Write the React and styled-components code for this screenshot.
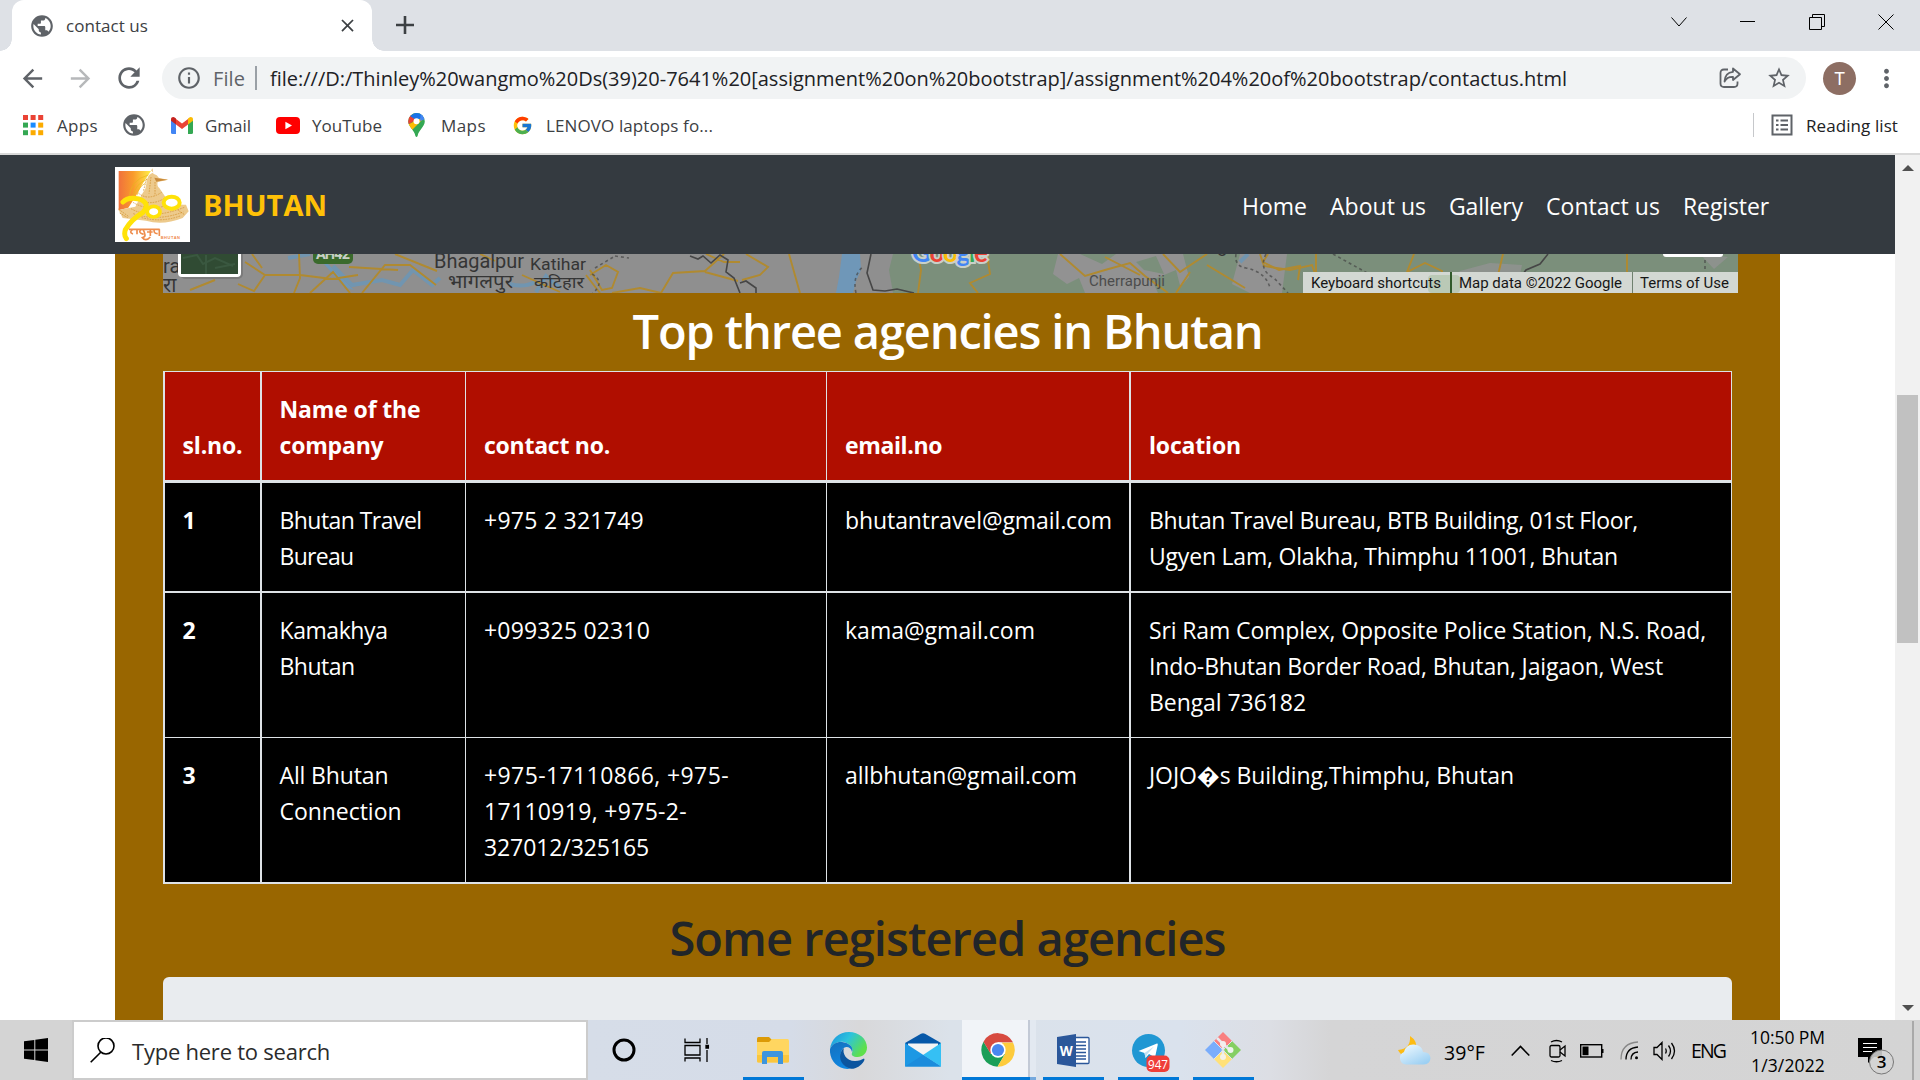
import React, { useLayoutEffect, useRef, useState } from 'react';
import styled, { createGlobalStyle } from 'styled-components';
import { MdPublic, MdClose, MdArrowBack, MdArrowForward, MdRefresh, MdInfoOutline, MdStarBorder, MdMoreVert } from 'react-icons/md';
import { FcGoogle } from 'react-icons/fc';

const Global = createGlobalStyle`
  * { box-sizing: border-box; }
  body { margin: 0; overflow: hidden; background: #fff; font-family: "Open Sans", "Noto Sans", sans-serif; }
  svg { display: block; flex: none; }
`;

/* ---------- text that is tracked to a fixed measure ---------- */
const FitSpan = styled.span`
  display: block;
  width: max-content;
  white-space: pre;
  margin-left: ${p => p.$ml || 0}px;
`;

function Fit({ w, ml, children }) {
  const ref = useRef(null);
  const [spacing, setSpacing] = useState(0);
  useLayoutEffect(() => {
    const natural = ref.current.getBoundingClientRect().width;
    setSpacing((w - natural) / String(children).length);
  }, [w, children]);
  return <FitSpan ref={ref} $ml={ml} style={{ letterSpacing: spacing }}>{children}</FitSpan>;
}

const Screen = styled.div`
  width: 1920px; height: 1080px; display: flex; flex-direction: column; overflow: hidden;
`;

/* ---------- browser chrome ---------- */
const TabStrip = styled.div`
  height: 51px; flex: none; background: #dee1e6; display: flex; padding-left: 12px;
`;
const Tab = styled.div`
  width: 360px; height: 51px; background: #fff; border-radius: 12px 12px 0 0; position: relative;
  display: flex; align-items: center; padding: 0 14px 0 17px; color: #3c4043; font-size: 17px;
  &::before, &::after {
    content: ''; position: absolute; bottom: 0; width: 12px; height: 12px;
  }
  &::before { left: -12px; background: radial-gradient(circle at 0 0, transparent 11.5px, #fff 12px); }
  &::after { right: -12px; background: radial-gradient(circle at 100% 0, transparent 11.5px, #fff 12px); }
`;
const TabTitle = styled.div`flex: 1; padding-left: 11px;`;
const NewTab = styled.div`padding: 16px 0 0 24px;`;
const WindowButtons = styled.div`margin-left: auto; display: flex; height: 43px;`;
const WindowButton = styled.div`
  width: 69px; display: flex; align-items: center; justify-content: center;
`;

const Toolbar = styled.div`
  height: 54px; flex: none; display: flex; align-items: center; padding-left: 18px; color: #5f6368;
`;
const ToolIcon = styled.div`margin-left: ${p => p.$ml || 0}px; opacity: ${p => (p.$dim ? 0.45 : 1)};`;
const Omnibox = styled.div`
  width: 1644px; height: 42px; border-radius: 21px; background: #f1f3f4; margin-left: 17px;
  display: flex; align-items: center; padding: 0 14px 0 14px; font-size: 20px;
`;
const OmniDivider = styled.div`width: 2px; height: 24px; background: #9aa0a6; margin: 0 13px 0 10px;`;
const Url = styled.div`color: #202124; flex: 1;`;
const Avatar = styled.div`
  width: 33px; height: 33px; border-radius: 50%; background: #8d6e63; color: #fff; margin-left: 17px;
  font: 18px/33px Roboto, sans-serif; text-align: center;
`;

const Bookmarks = styled.div`
  height: 50px; flex: none; padding: 0 22px 8px 22px; border-bottom: 2px solid #d9d9d9;
  display: flex; align-items: center; font-size: 17px; color: #3c4043;
`;
const Bookmark = styled.div`display: flex; align-items: center; margin-left: ${p => p.$ml || 0}px;`;
const ReadingList = styled.div`
  margin-left: auto; height: 24px; border-left: 1px solid #c6c8cb; padding-left: 17px; display: flex; align-items: center; color: #202124;
`;

/* ---------- page ---------- */
const Viewport = styled.div`flex: 1; min-height: 0; display: flex; overflow: hidden;`;
const Page = styled.div`width: 1895px; overflow: hidden; background: #fff;`;
const Navbar = styled.div`
  height: 99px; background: #343a40; display: flex; align-items: center; padding-left: 115px; color: #fff; font-size: 23px;
`;
const Brand = styled.div`font-size: 29px; font-weight: 700; color: #ffc107; margin-left: 13px;`;
const NavLinks = styled.nav`display: flex; margin: 3px 126px 0 auto;`;
const Container = styled.div`
  width: 1665px; height: 766px; margin-left: 115px; background: #996600; padding-left: 48px;
`;
const Heading = styled.h1`
  margin: 0; height: ${p => p.$h}px; padding-top: ${p => p.$pt || 0}px; width: 1569px; display: flex; justify-content: center;
  font-size: 47px; line-height: 76px; font-weight: 600; color: ${p => p.$color};
`;
const MapStrip = styled.div`height: 39px; width: 1575px; overflow: hidden;`;

const Table = styled.div`
  width: 1569px; border: solid #dee2e6; border-width: 1px 1px 2px 2px; color: #fff; font-size: 23px; line-height: 36px;
`;
const Row = styled.div`
  display: grid; grid-template-columns: 97px 204px 361px 304px 600px; height: ${p => p.$h}px;
  background: ${p => (p.$head ? '#b00e00' : '#000')}; border-bottom: ${p => p.$line}px solid #dee2e6;
  font-weight: ${p => (p.$head ? 700 : 400)};
`;
const Cell = styled.div`
  padding: 19px 0 17px ${p => p.$pl}px; display: flex; flex-direction: column;
  justify-content: ${p => (p.$bottom ? 'flex-end' : 'flex-start')};
  border-right: ${p => p.$line}px solid #dee2e6; font-weight: ${p => (p.$bold ? 700 : 'inherit')};
`;
const Panel = styled.div`width: 1569px; height: 60px; background: #e9ecef; border-radius: 6px;`;

const ScrollTrack = styled.div`
  width: 25px; background: #f1f1f1; display: flex; flex-direction: column; align-items: center; padding: 10px 0 9px;
`;
const Arrow = styled.div`
  width: 0; height: 0; border: solid transparent; border-width: 0 6px;
  ${p => (p.$down ? 'border-top: 6px solid #505050; margin-top: auto;' : 'border-bottom: 6px solid #505050;')}
`;
const Thumb = styled.div`width: 21px; height: 248px; background: #c1c1c1; margin-top: 224px;`;

/* ---------- taskbar ---------- */
const Taskbar = styled.div`
  height: 60px; flex: none; display: flex; align-items: stretch; color: #000; overflow: hidden;
  background: linear-gradient(90deg, #d4d4d4 0, #d4d4d4 72px, #d6dde8 588px, #d5dce8 790px, #d8d8da 860px, #dbe2ea 950px, #dae2ed 1180px, #dcdee4 1270px, #d5d5d6 1330px, #d4d4d4 100%);
`;
const Start = styled.div`width: 72px; display: flex; align-items: center; justify-content: center;`;
const Search = styled.div`
  width: 516px; border: 2px solid #ccc; background: #fff; display: flex; align-items: center; padding: 1px 0 0 16px;
  font-size: 22px; color: #2b2b2b;
`;
const TaskSlot = styled.div`
  width: ${p => p.$w || 75}px; display: flex; flex-direction: column; align-items: center; justify-content: space-between;
  background: ${p => (p.$active ? 'linear-gradient(90deg,#f1f4f8 66px,#c3cad6 66px,#c3cad6 68px,#e3e9f1 68px)' : 'none')};
`;
const TaskIcon = styled.div`height: 57px; padding: 3px ${p => p.$shift || 0}px 0 0; display: flex; align-items: center;`;
const Underline = styled.div`
  height: 3px; width: ${p => (p.$active ? '100%' : '61px')};
  background: ${p => (p.$active ? 'linear-gradient(90deg,#0078d7 68px,#76a9dd 68px)' : p.$on ? '#0078d7' : 'transparent')};
`;
const Tray = styled.div`flex: 1; display: flex; align-items: center; font-size: 19.5px; padding-top: 1px;`;
const TrayItem = styled.div`margin-left: ${p => p.$ml}px; padding-top: ${p => p.$pt || 0}px;`;
const Clock = styled.div`width: 75px; margin-left: 25px; font-size: 17.5px; line-height: 28px; display: flex; flex-direction: column; align-items: flex-end;`;
const ShowDesktop = styled.div`margin-left: auto; width: 8px; height: 60px; border-left: 2px solid #a9a9a9;`;

/* ---------- drawings ---------- */
const AppsIcon = () => (
  <svg width="22" height="22" viewBox="0 0 22 22">
    {['#ea4335', '#ea4335', '#ea4335', '#34a853', '#1a8cff', '#fbab00', '#34a853', '#fbab00', '#fbab00'].map((c, i) => (
      <rect key={i} x={1 + (i % 3) * 7.6} y={1 + Math.floor(i / 3) * 7.6} width="5" height="5" fill={c} />
    ))}
  </svg>
);
const GmailIcon = () => (
  <svg width="22" height="17" viewBox="0 0 22 17">
    <path d="M0 2.5V15.5Q0 17 1.5 17H5V7z" fill="#4285f4" />
    <path d="M22 2.5V15.5Q22 17 20.5 17H17V7z" fill="#34a853" />
    <path d="M5 2v5.5l6 4.5 6-4.5V2l-6 4.6z" fill="#ea4335" />
    <path d="M0 2.4C0 .2 2.3-.6 4 .7L5 1.5v6L0 3.8z" fill="#c5221f" />
    <path d="M22 2.4C22 .2 19.7-.6 18 .7l-1 .8v6l5-3.7z" fill="#fbbc04" />
  </svg>
);
const YoutubeIcon = () => (
  <svg width="24" height="17" viewBox="0 0 24 17"><rect width="24" height="17" rx="4" fill="#f00" /><path d="M9.4 4.8v7.4l6.6-3.7z" fill="#fff" /></svg>
);
const PinIcon = () => (
  <svg width="17" height="24" viewBox="0 0 17 24">
    <clipPath id="pin"><path d="M8.5 0A8.3 8.3 0 0 1 16.8 8.3C16.8 14 10.5 17 9.6 23q-1.1 2-2.2 0C6.5 17 .2 14 .2 8.3A8.3 8.3 0 0 1 8.5 0z" /></clipPath>
    <g clipPath="url(#pin)">
      <path d="M0 0h17v24H0z" fill="#34a853" />
      <path d="M5 9L13 3L16 5L3 18L-1 12z" fill="#fbbc04" />
      <path d="M3 1L-1 4V12L8 7z" fill="#ea4335" />
      <path d="M2 3L8 -1L18 1L12 6L8 7z" fill="#1a73e8" />
      <path d="M13 -1L18 2V6L12 8z" fill="#4285f4" />
    </g>
    <circle cx="8.5" cy="8.3" r="3" fill="#fff" />
  </svg>
);
const ReadingIcon = () => (
  <svg width="22" height="22" viewBox="0 0 22 22" fill="none" stroke="#5f6368" strokeWidth="2">
    <rect x="1.5" y="1.5" width="19" height="19" />
    <path d="M5 6.5h2.5M9.5 6.5H17M5 11h2.5M9.5 11H17M5 15.5h2.5M9.5 15.5H17" />
  </svg>
);
const ShareIcon = () => (
  <svg width="23" height="22" viewBox="0 0 23 22" fill="none" stroke="#5f6368" strokeWidth="1.8" strokeLinejoin="round">
    <path d="M9 2.5H5Q1.5 2.5 1.5 6V16.5Q1.5 20 5 20H15Q18.5 20 18.5 16.5V14.5" />
    <path d="M14 1.5l7 5.7-7 5.8V9.8Q8 9.5 5.5 14.5Q6 5.5 14 4.8z" />
  </svg>
);
const Glyph = ({ w, h, d, sw = 1.3, color = '#000' }) => (
  <svg width={w} height={h} viewBox={`0 0 ${w} ${h}`} fill="none" stroke={color} strokeWidth={sw}><path d={d} /></svg>
);

const BirdLogo = () => (
  <svg width="75" height="75" viewBox="0 0 225 225">
    <defs><linearGradient id="sun"><stop offset="0" stopColor="#f0713c" /><stop offset=".45" stopColor="#f99b2c" /><stop offset="1" stopColor="#fff04a" /></linearGradient></defs>
    <rect width="225" height="225" fill="#fff" />
    <path d="M11 12H108L86 45L62 88L40 122L11 130z" fill="url(#sun)" />
    <g fill="none" stroke="#e5b51e" strokeWidth="2"><path d="M42 95Q45 38 100 24M54 90Q60 48 100 36M66 85Q70 60 92 48" /></g>
    <path d="M108 10l5-6 2 16q12 3 17 13l28 5-32 7q-3 12 5 18l26 38q20 14 54 12l8 20-18 20q-60 24-110 8l-70-8-12-24 10-2 40-8 18-34 12-20 6-30q4-15 18-18z" fill="#edca8c" />
    <g fill="none" stroke="#cf8c25" strokeWidth="2" strokeDasharray="5 3">
      <path d="M70 78q28 25 70-2M60 92q45 30 92 0M54 106q48 30 110 6M48 125q60 35 160-4M55 140q70 25 150-5M80 152q60 15 115-5M95 35l-10 38M108 30l-6 50M120 45v38M10 126l30 22M14 138l24 14M190 130l20 14" />
    </g>
    <path d="M118 32l40 6-34 6z" fill="#c98a3a" />
    <g fill="none" stroke="#ffe208" strokeLinecap="round">
      <path d="M24 105Q38 88 72 96Q108 108 84 136Q48 158 31 188Q26 205 34 215" strokeWidth="15" />
      <ellipse cx="116" cy="134" rx="19" ry="16" strokeWidth="11" fill="#fff" /><ellipse cx="170" cy="107" rx="24" ry="18" strokeWidth="12" fill="#fff" />
    </g>
    <path d="M42 187h92M54 187q-14 9 0 14m12-14v15m13-15q-12 10 7 15m-2-15q12 22 0 24m22-24v20m-10-12h17m5-8q-4 12 10 13m5-13v20M80 210q12 16 26 0" fill="none" stroke="#ee8d4d" strokeWidth="5" />
    <text x="137" y="216" fontSize="12" fontWeight="700" textLength="58" fill="#ef8a4c" fontFamily="Liberation Sans, sans-serif">BHUTAN</text>
  </svg>
);

const deva = '"Noto Sans Devanagari", "Noto Sans", sans-serif';
const MapDrawing = () => (
  <svg width="1575" height="39" viewBox="163 254 1575 39">
    <rect x="163" y="254" width="1575" height="39" fill="#8f8f8f" />
    <path d="M893 254L889 270L893 293H1738V254z" fill="#7b8f7b" />
    <g fill="#929292">
      <path d="M1058 254l-5 20 14 10 12-6 6 15h90l14-16-6-23zM1240 254l-8 30 18 9h32l5-39z" />
      <path d="M1440 293l20-22 30-8 32 2-6 28zM1700 254l14 15 14-12z" opacity=".8" />
    </g>
    <g fill="#7b8f7b"><path d="M1080 254l22 10 14-10zM1136 262l20-6 8 18-20-4zM1152 280l24-10 6 23h-24zM926 254l14 8 5-8z" /></g>
    <path d="M842 254h18l1 16-5 11-3 12h-17l3-16zM314 254h10l4 10 26 26-10-3-20-23-8-2z" fill="#6f97b8" />
    <g fill="none" stroke="#7195b0" strokeWidth="4">
      <path d="M288 258L310 254M333 266L352 285L382 280L400 285L413 270L432 285L440 278M510 284q14 4 25-2M536 292L546 276L560 288M1240 262l8-8" />
    </g>
    <g fill="none" stroke="#b08a30" strokeWidth="1.9">
      <path d="M245 262L265 275L300 275L332 279L358 275M252 254L262 268M299 254L300 278L294 293M265 275L254 291L238 284M310 293L333 272L350 293M362 293L385 265L410 265L436 285M349 267L398 270M395 254L437 271M190 290L215 280M480 254L495 261M522 275L560 292M590 270L602 290L612 288L618 272L606 265L590 275M586 275L600 293M612 293L640 288L661 293L673 273L705 271L724 254M706 254L724 262L740 262M705 272L738 281" />
      <path d="M746 254L768 267L760 275L742 280M789 254L800 293M918 254L921 270L918 293M987 254L990 274L970 283L978 293M1060 254L1085 276L1105 270L1130 263L1145 276L1168 293M1105 257L1140 275M1163 254L1180 272L1207 254M1190 272L1176 293M1207 265L1245 288M1260 254L1264 266L1290 270L1312 265L1320 288L1350 293" />
      <path d="M1268 254L1263 262L1279 270L1300 266L1298 280M1316 254L1316 272L1340 293M1414 254L1407 272L1425 263L1442 271L1440 288M1503 254L1498 275L1502 293M1627 254V272" />
    </g>
    <g fill="none" stroke="#464646" strokeWidth="1.6">
      <path d="M690 256l8 3 5-3 8 7 9-8 8 5-2 12 8 6 6 15M871 254L867 273L873 290L885 291L897 289L914 293M740 283l6-2 10 7v5M1548 254l-8 10-14 6-9 12" />
      <path d="M595 268l20-12M615 256l14 2M592 274q14 8 0 20M856 293q-4-18 8-27M1266 254q-8 16 8 24l14 15M1236 254q-2 12 10 14 20 4 24 20M1333 254l36 20 14 19M1705 254v16" strokeDasharray="3 3" opacity=".7" />
    </g>
    <g fontFamily="Roboto, sans-serif" fill="#353535">
      <text x="163" y="273" fontSize="20">ra</text>
      <text x="163" y="292" fontSize="20" fontFamily={deva}>रा</text>
      <text x="434" y="268" fontSize="20" textLength="90" lengthAdjust="spacingAndGlyphs">Bhagalpur</text>
      <text x="448" y="288" fontSize="19" textLength="65" lengthAdjust="spacingAndGlyphs" fontFamily={deva}>भागलपुर</text>
      <text x="530" y="270" fontSize="17" textLength="56" lengthAdjust="spacingAndGlyphs">Katihar</text>
      <text x="534" y="288" fontSize="16.5" textLength="50" lengthAdjust="spacingAndGlyphs" fontFamily={deva}>कटिहार</text>
      <text x="1089" y="286" fontSize="15" textLength="76" lengthAdjust="spacingAndGlyphs" fill="#4c4c4c">Cherrapunji</text>
      <text x="1217" y="252" fontSize="19">g</text>
    </g>
    <rect x="313" y="240" width="40" height="24" rx="5" fill="#3a6a2c" />
    <text x="316" y="259" fontSize="14.5" fontWeight="700" textLength="34" fill="#c9cfc6" fontFamily="Roboto, sans-serif">AH42</text>
    <g fontFamily="Lato, sans-serif" fontWeight="700" fontSize="26" stroke="#c9d0c9" strokeWidth="4" paintOrder="stroke">
      <text x="912" y="262" textLength="76"><tspan fill="#4285f4">G</tspan><tspan fill="#ea4335">o</tspan><tspan fill="#fbbc05">o</tspan><tspan fill="#4285f4">g</tspan><tspan fill="#34a853">l</tspan><tspan fill="#ea4335">e</tspan></text>
    </g>
    <rect x="180" y="240" width="63" height="39" rx="5" fill="#555" opacity=".35" />
    <rect x="178" y="236" width="63" height="41" rx="4" fill="#fff" />
    <rect x="181" y="240" width="57" height="34" fill="#304b33" />
    <path d="M183 258l14-3 6 9 12-6 18 8M206 255v19M215 268l20-4" stroke="#3a5840" strokeWidth="2" fill="none" />
    <rect x="1663" y="240" width="60" height="17" rx="3" fill="#fff" />
    <rect x="1303" y="272" width="435" height="21" fill="#d3d8d3" />
    <rect x="1428" y="275" width="32" height="18" rx="4" fill="#bac9b6" />
    <rect x="1450" y="272" width="2" height="21" fill="#315a2b" />
    <rect x="1632" y="272" width="1" height="21" fill="#6f816f" />
    <g fontFamily="Roboto, sans-serif" fontSize="15" fill="#161616">
      <text x="1311" y="288" textLength="130">Keyboard shortcuts</text>
      <text x="1459" y="288" textLength="163">Map data ©2022 Google</text>
      <text x="1640" y="288" textLength="89">Terms of Use</text>
    </g>
  </svg>
);

const WinLogo = () => (
  <svg width="24" height="24" viewBox="0 0 24 24"><path d="M0 3.3L10.3 1.9V11.4H0zM11.3 1.7L24 0V11.4H11.3zM0 12.5H10.3V22.1L0 20.7zM11.3 12.5H24V24L11.3 22.2z" /></svg>
);
const FolderIcon = () => (
  <svg width="32" height="27" viewBox="0 0 32 27">
    <path d="M0 1.5Q0 0 1.5 0H12L15 3V10H0z" fill="#dc9a06" />
    <path d="M0 5H12L15 2H30.5Q32 2 32 4V24Q32 25.5 30.5 25.5H1.5Q0 25.5 0 24z" fill="#ffd660" />
    <path d="M0 18H32V24Q32 25.5 30.5 25.5H1.5Q0 25.5 0 24z" fill="#fac63e" />
    <path d="M5 27V16Q5 14 7 14H24Q26 14 26 16V27H21V20H10V27z" fill="#3d95dd" />
  </svg>
);
const EdgeIcon = () => (
  <svg width="37" height="37" viewBox="0 0 37 37">
    <defs>
      <linearGradient id="e1" x1="0" x2="1" y2=".5"><stop offset="0" stopColor="#1a8fdf" /><stop offset=".5" stopColor="#2dc3dc" /><stop offset="1" stopColor="#5ee04c" /></linearGradient>
      <linearGradient id="e2" x1="0" x2=".4" y2="1"><stop offset="0" stopColor="#1470be" /><stop offset="1" stopColor="#0f86e0" /></linearGradient>
    </defs>
    <path d="M0 17C1 7 9 0 19 0C29 0 37 7 37 15.5C37 21 33 25 27.5 25C23 25 21 23 22 21C24 17 21 12 14 10C8 9 2 12 0 17z" fill="url(#e1)" />
    <path d="M0 17C2 12 7 9.5 12 10C20 11 24 16 22 20C21 15 15 13 12 18C8 25 13 35 21 36.5C9 39 -1 29 0 17z" fill="url(#e2)" />
    <path d="M14 16C12 21 16 29 25 29C29 29 32 27.5 34 26.5Q35 27 34 29C31 34 26 37 21 36.8C12 35 8 26 11 20Q12 17 14 16z" fill="#0c559f" />
  </svg>
);
const MailIcon = () => (
  <svg width="36" height="34" viewBox="0 0 36 34">
    <path d="M0 10L16 .7Q18 -.4 20 .7L36 10L34 16H2z" fill="#0758a8" />
    <path d="M3 10.5H33V24H3z" fill="#f4f4f4" /><path d="M0 10L36 33.5H0z" fill="#1d98e4" /><path d="M36 10L18 22L36 33.5z" fill="#35c0f4" /><path d="M0 33.5L18 22L36 33.5z" fill="#1b8cdc" />
  </svg>
);
const ChromeIcon = () => (
  <svg width="34" height="34" viewBox="-17 -17 34 34">
    <path d="M-14.5 -8.3A16.7 16.7 0 0 0 -.5 16.7L7 4.1H-7z" fill="#1a9e57" />
    <path d="M15 -7.5A16.7 16.7 0 0 1 -.5 16.7L7 4.1L4 -7.5z" fill="#fdcb3c" />
    <path d="M-14.5 -8.3L-7.2 4.1L0 -7.7H15A16.7 16.7 0 0 0 -14.5 -8.3z" fill="#d74a40" />
    <circle r="7.7" fill="#fff" /><circle r="6.1" fill="#4a87f0" />
  </svg>
);
const WordIcon = () => (
  <svg width="33" height="33" viewBox="0 0 33 33">
    <rect x="15" y="3.5" width="17" height="26" rx="1" fill="#fff" stroke="#2b579a" strokeWidth="1.3" />
    <path d="M19 8h10M19 11.5h10M19 15h10M19 18.5h10M19 22h10M19 25h10" stroke="#2b579a" strokeWidth="1.7" />
    <path d="M0 3L19 0V33L0 30z" fill="#2b579a" />
    <text x="9.3" y="22" fontSize="15" fontWeight="700" fill="#fff" textAnchor="middle" textLength="13" lengthAdjust="spacingAndGlyphs" fontFamily="Open Sans, sans-serif">W</text>
  </svg>
);
const TelegramIcon = () => (
  <svg width="33" height="33" viewBox="0 0 33 33" overflow="visible">
    <circle cx="16.5" cy="16.5" r="16.5" fill="#2097d3" />
    <path d="M6.5 17L25 9.5Q26 9 25.7 11L23 23.5L17 20L13.5 24L12.5 19z" fill="#fff" /><path d="M12.5 19L22 12.5L15 20.5L13.5 24z" fill="#c3e0f2" />
    <rect x="14.5" y="21.5" width="23" height="16.5" rx="5" fill="#ef3e38" />
    <text x="26" y="34.7" fontSize="13.5" fill="#fff" textAnchor="middle" textLength="20" lengthAdjust="spacingAndGlyphs" fontFamily="Open Sans, sans-serif">947</text>
  </svg>
);
const GitIcon = () => (
  <svg width="36" height="36" viewBox="0 0 36 36">
    <path d="M18 0L27 9L18 18L9 9z" fill="#f98080" /><path d="M36 18L27 9L18 18L27 27z" fill="#85cf62" />
    <path d="M18 36L9 27L18 18L27 27z" fill="#ffe178" /><path d="M0 18L9 9L18 18L9 27z" fill="#7aadfb" />
    <path d="M12 6L18 12V27M18 12L25 18" stroke="#e6ebf0" strokeWidth="2.6" fill="none" />
    <circle cx="18" cy="12" r="3" fill="#f4eeee" /><circle cx="18" cy="25" r="3" fill="#f4f1e6" /><circle cx="25.5" cy="18" r="3" fill="#eef4ec" />
    <path d="M9 9L18 18L27 27M27 9L9 27" stroke="#dde3ec" strokeWidth="1" />
  </svg>
);
const TaskViewIcon = () => (
  <svg width="26" height="24" viewBox="0 0 26 24" fill="none" stroke="#000" strokeWidth="1.3">
    <path d="M1 .5V4.5H16V.5M1 23.5V20H16V23.5M1 7.5H16V17H1zM23 0V6M23 12V24" /><path d="M22 7.5h2.4v2.6h-2.4z" fill="#000" />
  </svg>
);
const WeatherIcon = () => (
  <svg width="34" height="30" viewBox="0 0 34 30">
    <defs><linearGradient id="cl" x2=".7" y2="1"><stop offset="0" stopColor="#f3fbff" /><stop offset="1" stopColor="#9dd0f3" /></linearGradient></defs>
    <path d="M12 0Q20 5 18 14L8 20Q2 19 0 14Q13 13 12 0z" fill="#fdbc14" />
    <path d="M8 28.5A6.5 6.5 0 0 1 6 16Q8 8 16 8.5Q24 9 25 16Q32 16 32.5 22Q32 28 26 28.5z" fill="url(#cl)" />
  </svg>
);
const CameraIcon = () => (
  <svg width="18" height="24" viewBox="0 0 18 24" fill="none" stroke="#000" strokeWidth="1.3">
    <rect x="1" y="6.5" width="10" height="11.5" rx="1.5" /><path d="M11 11l5-4v10l-5-4M2 3Q7.5 0 13 3M2 21.5Q7.5 24 13 21.5" />
  </svg>
);
const BatteryIcon = () => (
  <svg width="24" height="14" viewBox="0 0 24 14"><rect x=".7" y=".7" width="21" height="12.3" fill="none" stroke="#000" strokeWidth="1.4" /><rect x="2.5" y="2.5" width="6" height="8.7" /><rect x="22" y="5" width="1.5" height="4" /></svg>
);
const WifiIcon = () => (
  <svg width="19" height="19" viewBox="0 0 19 19" fill="none" stroke="#000" strokeWidth="1.3">
    <path d="M1 18.5Q1 2 18 1" stroke="#888" /><path d="M6 18.5Q6 7 18 6M11 18.5Q11 11.5 18 11" /><circle cx="16.5" cy="16.8" r="1.5" fill="#000" stroke="none" />
  </svg>
);
const VolumeIcon = () => (
  <svg width="23" height="20" viewBox="0 0 23 20" fill="none" stroke="#000" strokeWidth="1.3"><path d="M1 6.5h3L9 1.5v17l-5-5H1zM12.5 7.5q1.5 2.5 0 5M15.5 4.5q4 5.5 0 11M18.5 2q6 8 0 16" /></svg>
);
const NoticeIcon = () => (
  <svg width="37" height="38" viewBox="0 0 37 38">
    <path d="M0 0H24V19H16L10 25V19H0z" /><path d="M5 5.5H19M5 9.5H19M5 13.5H14" stroke="#fff" strokeWidth="1.2" />
    <circle cx="23.5" cy="24" r="12" fill="#d4d4d4" fillOpacity=".88" stroke="#777" />
    <text x="23.5" y="30" fontSize="17" fontWeight="600" textAnchor="middle" fontFamily="Open Sans, sans-serif">3</text>
  </svg>
);

/* ---------- data ---------- */
const LINES = [2, 1, 1, 2, 0];
const PADS = [17.5, 17.5, 18, 18, 18];
const HEAD = [[['sl.no.', 60]], [['Name of the', 141], ['company', 104]], [['contact no.', 126]], [['email.no', 97]], [['location', 92]]];
const ROWS = [
  { h: 110, line: 2, cells: [[['1', 12]], [['Bhutan Travel', 142], ['Bureau', 74]], [['+975 2 321749', 160]], [['bhutantravel@gmail.com', 267]], [['Bhutan Travel Bureau, BTB Building, 01st Floor,', 489], ['Ugyen Lam, Olakha, Thimphu 11001, Bhutan', 469]]] },
  { h: 145, line: 1, cells: [[['2', 13]], [['Kamakhya', 108], ['Bhutan', 75]], [['+099325 02310', 166]], [['kama@gmail.com', 190]], [['Sri Ram Complex, Opposite Police Station, N.S. Road,', 557], ['Indo-Bhutan Border Road, Bhutan, Jaigaon, West', 514], ['Bengal 736182', 157]]] },
  { h: 144, line: 0, cells: [[['3', 13]], [['All Bhutan', 109], ['Connection', 122]], [['+975-17110866, +975-', 245], ['17110919, +975-2-', 203], ['327012/325165', 165]], [['allbhutan@gmail.com', 232]], [['JOJO\uFFFDs Building,Thimphu, Bhutan', 365]]] },
];
const NAV = [['Home', 65, 0], ['About us', 96, 23], ['Gallery', 74, 23], ['Contact us', 114, 23], ['Register', 86, 23]];

const Lines = ({ items }) => items.map(([t, w]) => <Fit key={t} w={w}>{t}</Fit>);

const Task = ({ icon, w, on, active, shift }) => (
  <TaskSlot $w={w} $active={active}><TaskIcon $shift={shift}>{icon}</TaskIcon><Underline $on={on} $active={active} /></TaskSlot>
);

export default function App() {
  return (
    <Screen>
      <Global />
      <TabStrip>
        <Tab>
          <MdPublic size={26} color="#5f6368" />
          <TabTitle><Fit w={82}>contact us</Fit></TabTitle>
          <MdClose size={21} />
        </Tab>
        <NewTab><Glyph w={18} h={18} d="M9 0V18M0 9H18" sw={2.6} color="#3c4043" /></NewTab>
        <WindowButtons>
          <WindowButton><Glyph w={16} h={10} d="M.5 .5L8 9L15.5 .5" sw={1} /></WindowButton>
          <WindowButton><Glyph w={15} h={1} d="M0 .5H15" sw={1} /></WindowButton>
          <WindowButton><Glyph w={16} h={16} d="M.5 3.5H12.5V15.5H.5zM3.5 3V.5H15.5V12.5H12.5" sw={1} /></WindowButton>
          <WindowButton><Glyph w={16} h={16} d="M.5 .5L15.5 15.5M15.5 .5L.5 15.5" sw={1} /></WindowButton>
        </WindowButtons>
      </TabStrip>

      <Toolbar>
        <ToolIcon><MdArrowBack size={29} /></ToolIcon>
        <ToolIcon $ml={19} $dim><MdArrowForward size={29} /></ToolIcon>
        <ToolIcon $ml={18}><MdRefresh size={32} /></ToolIcon>
        <Omnibox>
          <MdInfoOutline size={26} />
          <Fit w={32} ml={11}>File</Fit>
          <OmniDivider />
          <Url><Fit w={1297}>file:///D:/Thinley%20wangmo%20Ds(39)20-7641%20[assignment%20on%20bootstrap]/assignment%204%20of%20bootstrap/contactus.html</Fit></Url>
          <ShareIcon />
          <ToolIcon $ml={24}><MdStarBorder size={26} /></ToolIcon>
        </Omnibox>
        <Avatar>T</Avatar>
        <ToolIcon $ml={16}><MdMoreVert size={29} /></ToolIcon>
      </Toolbar>

      <Bookmarks>
        <Bookmark><AppsIcon /><Fit w={41} ml={13}>Apps</Fit></Bookmark>
        <Bookmark $ml={23}><MdPublic size={26} color="#5f6368" /></Bookmark>
        <Bookmark $ml={24}><GmailIcon /><Fit w={46} ml={12}>Gmail</Fit></Bookmark>
        <Bookmark $ml={25}><YoutubeIcon /><Fit w={70} ml={12}>YouTube</Fit></Bookmark>
        <Bookmark $ml={26}><PinIcon /><Fit w={45} ml={16}>Maps</Fit></Bookmark>
        <Bookmark $ml={26}><FcGoogle size={21} /><Fit w={167} ml={13}>LENOVO laptops fo...</Fit></Bookmark>
        <ReadingList><ReadingIcon /><Fit w={92} ml={13}>Reading list</Fit></ReadingList>
      </Bookmarks>

      <Viewport>
        <Page>
          <Navbar>
            <BirdLogo />
            <Brand><Fit w={124}>BHUTAN</Fit></Brand>
            <NavLinks>{NAV.map(([t, w, ml]) => <Fit key={t} w={w} ml={ml}>{t}</Fit>)}</NavLinks>
          </Navbar>
          <Container>
            <MapStrip><MapDrawing /></MapStrip>
            <Heading $h={78} $color="#fff"><Fit w={630}>Top three agencies in Bhutan</Fit></Heading>
            <Table>
              <Row $head $h={111} $line={3}>
                {HEAD.map((c, i) => <Cell key={i} $line={LINES[i]} $pl={PADS[i]} $bottom><Lines items={c} /></Cell>)}
              </Row>
              {ROWS.map((r, n) => (
                <Row key={n} $h={r.h} $line={r.line}>
                  {r.cells.map((c, i) => <Cell key={i} $line={LINES[i]} $pl={PADS[i]} $bold={i === 0}><Lines items={c} /></Cell>)}
                </Row>
              ))}
            </Table>
            <Heading $h={93} $pt={16} $color="#212529"><Fit w={556}>Some registered agencies</Fit></Heading>
            <Panel />
          </Container>
        </Page>
        <ScrollTrack><Arrow /><Thumb /><Arrow $down /></ScrollTrack>
      </Viewport>

      <Taskbar>
        <Start><WinLogo /></Start>
        <Search>
          <Glyph w={25} h={25} d="M10.5 14.5L.7 24.3M24 8A8 8 0 1 1 8 8A8 8 0 1 1 24 8" sw={1.6} />
          <Fit w={198} ml={17}>Type here to search</Fit>
        </Search>
        <Task w={72} icon={<svg width="24" height="24" viewBox="0 0 24 24"><circle cx="12" cy="12" r="10" fill="none" stroke="#000" strokeWidth="3" /></svg>} />
        <Task shift={2} icon={<TaskViewIcon />} />
        <Task w={76} on icon={<FolderIcon />} />
        <Task shift={1} icon={<EdgeIcon />} />
        <Task w={76} shift={2} icon={<MailIcon />} />
        <Task w={74} active shift={3} icon={<ChromeIcon />} />
        <Task on icon={<WordIcon />} />
        <Task on icon={<TelegramIcon />} />
        <Task on shift={1} icon={<GitIcon />} />
        <Tray>
          <TrayItem $ml={137}><WeatherIcon /></TrayItem>
          <TrayItem $ml={12} $pt={3}><Fit w={41}>39°F</Fit></TrayItem>
          <TrayItem $ml={26}><Glyph w={19} h={12} d="M.7 10.5L9.5 1.5L18.3 10.5" sw={1.6} /></TrayItem>
          <TrayItem $ml={19}><CameraIcon /></TrayItem>
          <TrayItem $ml={13}><BatteryIcon /></TrayItem>
          <TrayItem $ml={16}><WifiIcon /></TrayItem>
          <TrayItem $ml={14}><VolumeIcon /></TrayItem>
          <TrayItem $ml={15}><Fit w={34}>ENG</Fit></TrayItem>
          <Clock><Fit w={75}>10:50 PM</Fit><Fit w={74}>1/3/2022</Fit></Clock>
          <TrayItem $ml={33} $pt={12}><NoticeIcon /></TrayItem>
          <ShowDesktop />
        </Tray>
      </Taskbar>
    </Screen>
  );
}
